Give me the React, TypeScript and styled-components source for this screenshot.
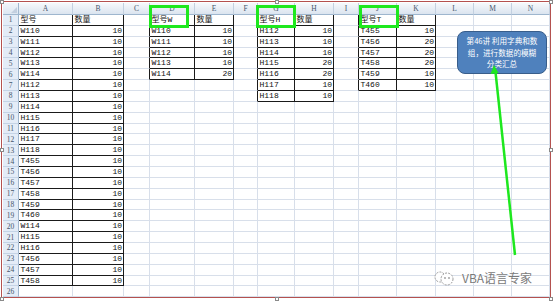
import styled, { createGlobalStyle } from "styled-components";

const GlobalStyle = createGlobalStyle`
  body {
    margin: 0;
    background: #ffffff;
  }
`;

const COLS = ["A", "B", "C", "D", "E", "F", "G", "H", "I", "J", "K", "L", "M", "N"];
const ROWS = 26;

type Table = { col: number; head: [string, string]; rows: [string, string][] };

const listA = [
  "W110", "W111", "W112", "W113", "W114", "H112", "H113", "H114", "H115", "H116", "H117", "H118",
  "T455", "T456", "T457", "T458", "T459", "T460", "W114", "H115", "H116", "T456", "T457", "T458",
];

const tables: Table[] = [
  { col: 0, head: ["型号", "数量"], rows: listA.map((m) => [m, "10"] as [string, string]) },
  {
    col: 3,
    head: ["型号W", "数量"],
    rows: [["W110", "10"], ["W111", "10"], ["W112", "10"], ["W113", "10"], ["W114", "20"]],
  },
  {
    col: 6,
    head: ["型号H", "数量"],
    rows: [["H112", "10"], ["H113", "10"], ["H114", "10"], ["H115", "20"], ["H116", "20"], ["H117", "10"], ["H118", "10"]],
  },
  {
    col: 9,
    head: ["型号T", "数量"],
    rows: [["T455", "10"], ["T456", "20"], ["T457", "20"], ["T458", "20"], ["T459", "10"], ["T460", "10"]],
  },
];

type CellData = { text: string; right: boolean };
const cells = new Map<string, CellData>();
tables.forEach((t) => {
  cells.set(`0,${t.col}`, { text: t.head[0], right: false });
  cells.set(`0,${t.col + 1}`, { text: t.head[1], right: false });
  t.rows.forEach(([m, q], i) => {
    cells.set(`${i + 1},${t.col}`, { text: m, right: false });
    cells.set(`${i + 1},${t.col + 1}`, { text: q, right: true });
  });
});
const inTable = (r: number, c: number) => cells.has(`${r},${c}`);

const Page = styled.div`
  position: relative;
  width: 554px;
  height: 301px;
  padding: 1px 0 0 1px;
  box-sizing: border-box;
  overflow: hidden;
`;

const Frame = styled.div`
  width: 550px;
  height: 297px;
  box-sizing: border-box;
  border: 1px solid #b4514f;
  padding: 1px 0 0 1px;
  overflow: hidden;
  background: #ffffff;
`;

const Sheet = styled.div`
  display: grid;
  grid-template-columns: 16px 54px 51px 26px 45px 39px 24px 37px 39px 25px 38px 39px 38px 38px 1fr;
  grid-template-rows: 12px repeat(${ROWS}, 10.86px);
  font-family: "Liberation Mono", "Noto Sans CJK SC", monospace;
  font-size: 8px;
  color: #111111;
`;

const Corner = styled.div`
  position: relative;
  box-sizing: border-box;
  background: linear-gradient(#f1f5fa, #dde6f1);
  border-right: 1px solid #9eb6ce;
  border-bottom: 1px solid #9eb6ce;

  &::after {
    content: "";
    position: absolute;
    right: 1px;
    bottom: 1px;
    border-left: 6px solid transparent;
    border-bottom: 6px solid #c3cfdf;
  }
`;

const ColHeader = styled.div`
  box-sizing: border-box;
  background: linear-gradient(#f6f9fc, #dbe4ef);
  border-right: 1px solid #c3d0e0;
  border-bottom: 1px solid #9eb6ce;
  color: #46566c;
  font-family: "Liberation Serif", serif;
  font-size: 7.5px;
  line-height: 11px;
  text-align: center;
  overflow: hidden;
`;

const RowHeader = styled.div`
  box-sizing: border-box;
  background: #e4ecf7;
  border-right: 1px solid #9eb6ce;
  border-bottom: 1px solid #c5d4e6;
  color: #46566c;
  font-family: "Liberation Serif", serif;
  font-size: 7.5px;
  display: flex;
  align-items: center;
  justify-content: center;
`;

const Cell = styled.div<{ $right: boolean; $darkRight: boolean; $darkBottom: boolean }>`
  box-sizing: border-box;
  border-right: 1px solid ${(p) => (p.$darkRight ? "#1a1a1a" : "#d8dfea")};
  border-bottom: 1px solid ${(p) => (p.$darkBottom ? "#1a1a1a" : "#d8dfea")};
  padding: 0 1px 0 1.5px;
  display: flex;
  align-items: center;
  justify-content: ${(p) => (p.$right ? "flex-end" : "flex-start")};
  white-space: nowrap;
  overflow: hidden;
  line-height: 1;
`;

const Highlight = styled.div<{ $left: number }>`
  position: absolute;
  left: ${(p) => p.$left}px;
  top: 5px;
  width: 40px;
  height: 23px;
  box-sizing: border-box;
  border: 3px solid #1ee81e;
`;

const Callout = styled.div`
  position: absolute;
  left: 457px;
  top: 31px;
  width: 90px;
  height: 43px;
  box-sizing: border-box;
  background: #4f81bd;
  border: 1px solid #385d8a;
  border-radius: 8px;
  color: #ffffff;
  font-family: "Noto Sans CJK SC", sans-serif;
  font-size: 7.6px;
  line-height: 11.7px;
  text-align: center;
  white-space: nowrap;
  padding-top: 3px;
`;

const Overlay = styled.svg`
  position: absolute;
  left: 0;
  top: 0;
  pointer-events: none;
`;

const Watermark = styled.div`
  position: absolute;
  left: 432px;
  top: 269px;
  display: flex;
  align-items: center;
  gap: 6px;
  font-family: "Noto Sans CJK SC", sans-serif;
  font-size: 12px;
  color: #7a7a7a;
  text-shadow: 0 0 2px #ffffff, 0 0 1px #ffffff;
`;

const Handle = styled.div<{ $x: number; $y: number }>`
  position: absolute;
  left: ${(p) => p.$x}px;
  top: ${(p) => p.$y}px;
  width: 4px;
  height: 4px;
  box-sizing: border-box;
  border: 1px solid #8a8a8a;
  background: #ffffff;
`;

const handles = [
  [0, 0], [275, 0], [549, 0],
  [0, 148], [549, 148],
  [0, 297], [275, 297], [549, 297],
];

const App = () => {
  const grid = [];
  grid.push(<Corner key="corner" />);
  COLS.forEach((c) => grid.push(<ColHeader key={`h${c}`}>{c}</ColHeader>));
  for (let r = 0; r < ROWS; r++) {
    grid.push(<RowHeader key={`r${r}`}>{r + 1}</RowHeader>);
    for (let c = 0; c < COLS.length; c++) {
      const d = cells.get(`${r},${c}`);
      const own = inTable(r, c);
      grid.push(
        <Cell
          key={`${r},${c}`}
          $right={!!d?.right}
          $darkRight={own || inTable(r, c + 1)}
          $darkBottom={own || inTable(r + 1, c)}
        >
          {d?.text}
        </Cell>
      );
    }
  }

  return (
    <Page>
      <GlobalStyle />
      <Frame>
        <Sheet>{grid}</Sheet>
      </Frame>

      <Highlight $left={149} />
      <Highlight $left={256} />
      <Highlight $left={359} />

      <Callout>
        第46讲 利用字典和数
        <br />
        组，进行数据的模糊
        <br />
        分类汇总
      </Callout>

      <Overlay width="554" height="301" viewBox="0 0 554 301">
        <line x1="495.5" y1="72" x2="515" y2="255" stroke="#1ee81e" strokeWidth="2.5" />
        <polygon points="494,65 490.5,74 498.5,73" fill="#1ee81e" />
      </Overlay>

      <Watermark>
        <svg width="24" height="16" viewBox="0 0 24 16">
          <circle cx="8" cy="7" r="5" fill="#ffffff" stroke="#9a9a9a" strokeWidth="1" strokeDasharray="2 1.2" />
          <circle cx="15" cy="9" r="6" fill="#ffffff" stroke="#9a9a9a" strokeWidth="1" strokeDasharray="2 1.2" />
          <circle cx="13" cy="8" r="0.9" fill="#9a9a9a" />
          <circle cx="17" cy="8" r="0.9" fill="#9a9a9a" />
        </svg>
        <span>VBA语言专家</span>
      </Watermark>

      {handles.map(([x, y]) => (
        <Handle key={`${x}-${y}`} $x={x} $y={y} />
      ))}
    </Page>
  );
};

export default App;
